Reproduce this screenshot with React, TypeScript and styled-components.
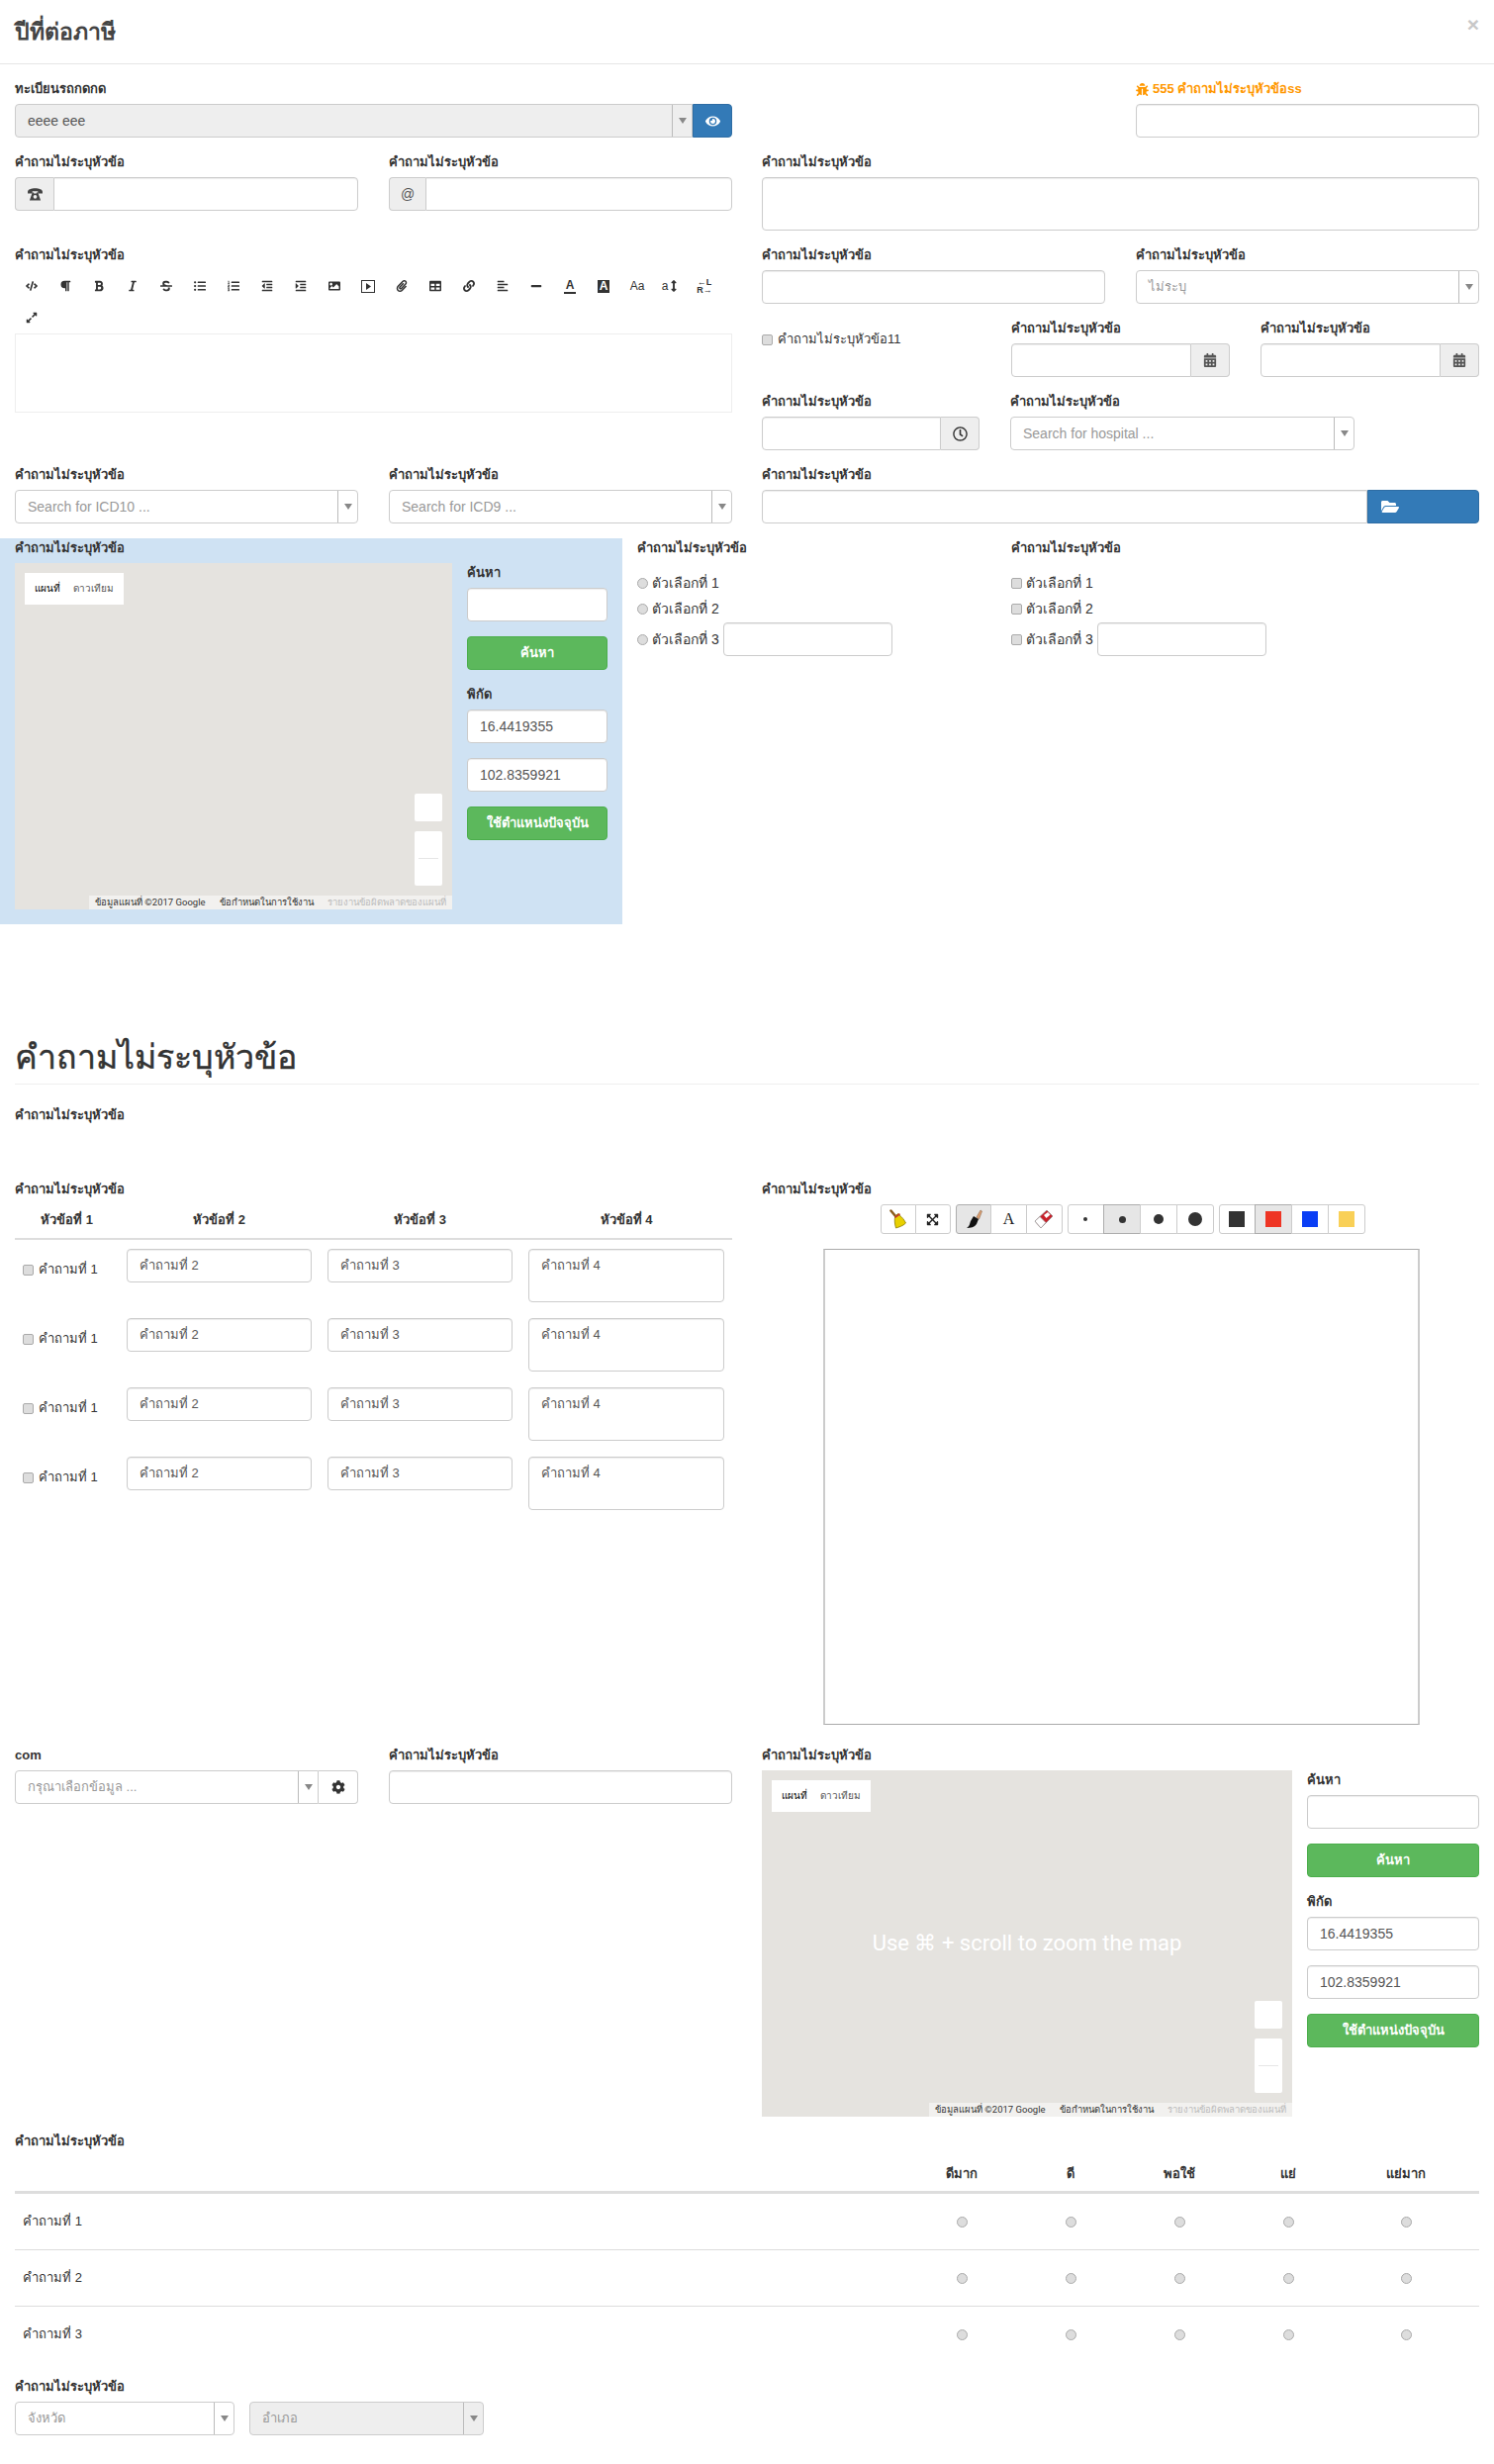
import React from "react";
import styled, { createGlobalStyle } from "styled-components";
import {
  FaAlignLeft, FaBold, FaBug, FaCalendarAlt, FaCode, FaCog, FaExpandAlt, FaEye, FaFolderOpen,
  FaImage, FaIndent, FaItalic, FaLink, FaListOl, FaListUl, FaMinus, FaOutdent, FaParagraph,
  FaPaperclip, FaRegClock, FaStrikethrough, FaTable, FaArrowsAltV, FaExpandArrowsAlt,
} from "react-icons/fa";

const Global = createGlobalStyle`
  html, body { margin: 0; padding: 0; background: #fff; }
  body {
    font-family: "Liberation Sans", "Noto Sans", "DejaVu Sans", sans-serif;
    font-size: 14px;
    line-height: 20px;
    color: #333;
  }
  * { box-sizing: border-box; }
`;

const Page = styled.div`
  width: 1510px;
  min-height: 2490px;
`;

const ModalHeader = styled.div`
  height: 65px;
  padding: 0 15px;
  display: flex;
  justify-content: space-between;
  border-bottom: 1px solid #e5e5e5;
`;

const ModalTitle = styled.h4`
  margin: 0;
  font-size: 23px;
  font-weight: 700;
  line-height: 64px;
  color: #444;
`;

const Close = styled.span`
  font-size: 21px;
  font-weight: 700;
  line-height: 50px;
  color: #c8c8c8;
`;

const Body = styled.div`
  padding: 15px 15px 30px;
`;

const TwoCols = styled.div`
  display: grid;
  grid-template-columns: 725px 725px;
  column-gap: 30px;
`;

const Stack = styled.div`
  display: flex;
  flex-direction: column;
`;

const Pair = styled.div`
  display: grid;
  grid-template-columns: 347px 347px;
  column-gap: 31px;
`;

const Thirds = styled.div`
  display: grid;
  grid-template-columns: 221px 221px 221px;
  column-gap: 31px;
`;

const TimeRow = styled.div`
  display: grid;
  grid-template-columns: 220px 348px;
  column-gap: 31px;
`;

const Field = styled.div<{ $gap?: number }>`
  margin-bottom: ${(p) => p.$gap ?? 15}px;
  min-width: 0;
`;

const Label = styled.label<{ $warn?: boolean }>`
  display: flex;
  align-items: center;
  gap: 4px;
  height: 20px;
  margin-bottom: 5px;
  font-weight: 700;
  font-size: 13px;
  white-space: nowrap;
  color: ${(p) => (p.$warn ? "#ff9800" : "#333")};
`;

const Input = styled.input<{ $flat?: string }>`
  display: block;
  width: 100%;
  height: 34px;
  padding: 0 12px;
  border: 1px solid #ccc;
  border-radius: ${(p) => p.$flat ?? "4px"};
  background: #fff;
  font: inherit;
  color: #555;
  outline: none;
  box-shadow: inset 0 1px 1px rgba(0, 0, 0, 0.075);
`;

const TextBox = styled.div<{ $h?: number }>`
  height: ${(p) => p.$h ?? 54}px;
  padding: 6px 12px;
  border: 1px solid #ccc;
  border-radius: 4px;
  background: #fff;
  color: #555;
  font-size: 13px;
  box-shadow: inset 0 1px 1px rgba(0, 0, 0, 0.075);
`;

const Group = styled.div`
  display: flex;
  height: 34px;
`;

const Addon = styled.span<{ $w: number; $side: "left" | "right"; $plain?: boolean }>`
  flex: none;
  width: ${(p) => p.$w}px;
  display: flex;
  align-items: center;
  justify-content: center;
  background: ${(p) => (p.$plain ? "#fff" : "#eee")};
  border: 1px solid #ccc;
  border-${(p) => (p.$side === "left" ? "right" : "left")}: 0;
  border-radius: ${(p) => (p.$side === "left" ? "4px 0 0 4px" : "0 4px 4px 0")};
  color: #555;
  font-size: 14px;
`;

const SelectBox = styled.div<{ $off?: boolean; $flat?: boolean }>`
  flex: 1;
  height: 34px;
  display: flex;
  align-items: center;
  border: 1px solid #ccc;
  border-radius: ${(p) => (p.$flat ? "4px 0 0 4px" : "4px")};
  background: ${(p) => (p.$off ? "#eee" : "#fff")};
  min-width: 0;
`;

const SelectText = styled.span<{ $dark?: boolean; $latin?: boolean }>`
  flex: 1;
  padding-left: 12px;
  font-size: ${(p) => (p.$latin ? 14 : 13)}px;
  color: ${(p) => (p.$dark ? "#555" : "#999")};
  white-space: nowrap;
`;

const Arrow = styled.span`
  flex: none;
  width: 20px;
  height: 100%;
  display: flex;
  align-items: center;
  justify-content: center;
  border-left: 1px solid #bbb;
  &::after {
    content: "";
    border-top: 6px solid #888;
    border-left: 4px solid transparent;
    border-right: 4px solid transparent;
  }
`;

const Select = ({ text, off, flat, dark, latin }: { text: string; off?: boolean; flat?: boolean; dark?: boolean; latin?: boolean }) => (
  <SelectBox $off={off} $flat={flat}>
    <SelectText $dark={dark} $latin={latin}>{text}</SelectText>
    <Arrow />
  </SelectBox>
);

const SideButton = styled.span<{ $w: number }>`
  flex: none;
  width: ${(p) => p.$w}px;
  display: flex;
  align-items: center;
  background: #337ab7;
  border: 1px solid #2e6da4;
  border-radius: 0 4px 4px 0;
  color: #fff;
  font-size: 15px;
  justify-content: center;
`;

const Toolbar = styled.div`
  display: flex;
  flex-wrap: wrap;
`;

const Tool = styled.span`
  width: 34px;
  height: 32px;
  display: flex;
  align-items: center;
  justify-content: center;
  font-size: 12px;
  color: #333;
`;

const ToolLetter = styled.span<{ $inv?: boolean }>`
  font-size: 12px;
  font-weight: 700;
  line-height: 13px;
  padding: 0 2px;
  color: ${(p) => (p.$inv ? "#fff" : "#333")};
  background: ${(p) => (p.$inv ? "#333" : "transparent")};
  border-bottom: ${(p) => (p.$inv ? "0" : "2px solid #333")};
`;

const ToolSmall = styled.span`
  font-size: 9px;
  line-height: 8px;
  font-weight: 700;
  text-align: center;
  white-space: nowrap;
`;

const Editor = styled.div`
  height: 80px;
  border: 1px solid #eee;
`;

const CheckRow = styled.label`
  display: flex;
  align-items: center;
  gap: 5px;
  height: 20px;
  margin-top: 11px;
  font-size: 13px;
`;

const Box = styled.span`
  flex: none;
  width: 11px;
  height: 11px;
  border: 1px solid #aaa;
  border-radius: 2px;
  background: #ddd;
`;

const Dot = styled(Box)`
  border-radius: 50%;
`;

const PanelRow = styled.div`
  display: flex;
  margin: 0 -15px;
`;

const BluePanel = styled.div`
  width: 629px;
  padding: 0 15px 15px;
  background: #cfe2f3;
`;

const MapRow = styled.div`
  display: flex;
  gap: 15px;
`;

const MapCanvas = styled.div<{ $w: number }>`
  position: relative;
  flex: none;
  width: ${(p) => p.$w}px;
  height: 350px;
  background: #e5e3df;
`;

const MapTabs = styled.div`
  position: absolute;
  left: 10px;
  top: 10px;
  width: 100px;
  height: 32px;
  display: flex;
  align-items: center;
  justify-content: space-around;
  padding: 0 4px;
  background: #fff;
  font-size: 10px;
  font-family: Roboto, "Liberation Sans", sans-serif;
  color: #565656;
`;

const MapTabOn = styled.span`
  color: #000;
  font-weight: 500;
`;

const ZoomBox = styled.div<{ $bottom: number; $h: number }>`
  position: absolute;
  right: 10px;
  bottom: ${(p) => p.$bottom}px;
  width: 28px;
  height: ${(p) => p.$h}px;
  display: flex;
  align-items: center;
  justify-content: center;
  background: #fff;
  border-radius: 2px;
  &::after {
    content: ${(p) => (p.$h > 40 ? '""' : "none")};
    width: 20px;
    height: 1px;
    background: #e6e6e6;
  }
`;

const Attribution = styled.div`
  position: absolute;
  right: 0;
  bottom: 0;
  width: 367px;
  height: 14px;
  display: flex;
  align-items: center;
  justify-content: space-between;
  padding: 0 6px;
  background: rgba(255, 255, 255, 0.5);
  font-family: Roboto, "Liberation Sans", sans-serif;
  font-size: 9.5px;
  white-space: nowrap;
  color: #333;
`;

const AttrFaint = styled.span`
  color: #bbb;
`;

const ZoomHint = styled.div`
  position: absolute;
  inset: 0;
  display: flex;
  align-items: center;
  justify-content: center;
  font-family: Roboto, "Liberation Sans", sans-serif;
  font-size: 22px;
  color: #fff;
`;

const MapSide = styled.div`
  flex: 1;
`;

const GreenButton = styled.div`
  height: 34px;
  margin-bottom: 15px;
  display: flex;
  align-items: center;
  justify-content: center;
  background: #5cb85c;
  border: 1px solid #4cae4c;
  border-radius: 4px;
  color: #fff;
  font-size: 13px;
  font-weight: 700;
`;

const Choices = styled.div`
  width: 347px;
  margin-left: 15px;
  margin-right: 16px;
`;

const ChoiceList = styled.div`
  margin-top: 12px;
  display: flex;
  flex-direction: column;
`;

const Choice = styled.div`
  display: flex;
  align-items: center;
  gap: 4px;
  height: 26px;
  font-size: 14px;
  white-space: nowrap;
`;

const ChoiceInput = styled(Choice)`
  height: 34px;
  margin-top: 1px;
  ${Input} {
    width: 171px;
  }
`;

const SectionTitle = styled.h2`
  display: flex;
  align-items: center;
  height: 56px;
  margin: 106px 0 21px;
  border-bottom: 1px solid #eee;
  font-size: 34px;
  font-weight: 500;
  color: #333;
  -webkit-text-stroke: 0.4px #333;
`;

const LonelyField = styled.div`
  height: 75px;
`;

const Grid4 = styled.div`
  display: grid;
  grid-template-columns: 105px 203px 203px 214px;
`;

const Grid4Head = styled(Grid4)`
  height: 36px;
  padding-top: 6px;
  border-bottom: 2px solid #ddd;
`;

const HeadCell = styled.div`
  text-align: center;
  font-size: 13px;
  font-weight: 700;
`;

const Grid4Row = styled(Grid4)`
  height: 70px;
  padding-top: 9px;
  align-items: start;
`;

const Cell = styled.div`
  padding: 0 8px;
`;

const RowCheck = styled.div`
  display: flex;
  align-items: center;
  gap: 5px;
  height: 20px;
  margin-top: 11px;
  padding-left: 8px;
  font-size: 13px;
  white-space: nowrap;
`;

const TextBoxShort = styled(TextBox)`
  height: 34px;
`;

const DrawTools = styled.div`
  display: flex;
  justify-content: center;
  gap: 5px;
  margin-bottom: 15px;
  padding-left: 4px;
`;

const BtnGroup = styled.div<{ $w: number }>`
  display: flex;
  width: ${(p) => p.$w}px;
`;

const DrawBtn = styled.span<{ $on?: boolean }>`
  flex: 1;
  height: 30px;
  display: flex;
  align-items: center;
  justify-content: center;
  margin-left: -1px;
  border: 1px solid ${(p) => (p.$on ? "#adadad" : "#ccc")};
  background: ${(p) => (p.$on ? "#e6e6e6" : "#fff")};
  font-family: "Liberation Serif", serif;
  font-size: 16px;
  color: #222;
  &:first-child {
    margin-left: 0;
    border-radius: 3px 0 0 3px;
  }
  &:last-child {
    border-radius: 0 3px 3px 0;
  }
`;

const Swatch = styled.span<{ $c: string }>`
  width: 16px;
  height: 16px;
  background: ${(p) => p.$c};
`;

const SizeDot = styled.span<{ $s: number }>`
  width: ${(p) => p.$s}px;
  height: ${(p) => p.$s}px;
  border-radius: 50%;
  background: #333;
`;

const Sketch = styled.div`
  width: 603px;
  height: 481px;
  margin: 0 0 21px 62px;
  border-style: solid;
  border-width: 1px 2px;
  border-color: #aaa #ccc;
`;

const LikertHead = styled.div`
  display: grid;
  grid-template-columns: 1fr 110px 110px 110px 110px 138px;
  height: 38px;
  padding-top: 8px;
  border-bottom: 3px solid #ddd;
`;

const LikertBody = styled.div`
  margin-bottom: 15px;
`;

const LikertRow = styled(LikertHead)`
  height: 57px;
  padding-top: 0;
  align-items: center;
  border-bottom: 1px solid #ddd;
  &:last-child {
    height: 56px;
    border-bottom: 0;
  }
`;

const LikertCell = styled.div<{ $last?: boolean }>`
  display: flex;
  justify-content: center;
  padding-right: ${(p) => (p.$last ? 10 : 0)}px;
  font-size: 13px;
  font-weight: 700;
`;

const LikertText = styled.div`
  padding-left: 8px;
  font-size: 13px;
`;

const AddressRow = styled.div`
  display: flex;
  gap: 15px;
`;

const AddressSelect = styled.div<{ $w: number }>`
  width: ${(p) => p.$w}px;
  display: flex;
`;

const PhoneGlyph = () => (
  <svg width="15" height="14" viewBox="0 0 16 15" fill="#444">
    <path d="M0 5C0 0 16 0 16 5v2h-5V4.500H5V7H0z" />
    <path d="M5 6h1.500v1h3V6H11l3 8.500H2zM8 8.500a2 2 0 1 0 0 4 2 2 0 0 0 0-4z" />
  </svg>
);

const VideoGlyph = () => (
  <svg width="14" height="13" viewBox="0 0 14 13">
    <rect x=".5" y=".5" width="13" height="12" fill="none" stroke="#333" />
    <path d="M5 3l5 3.500L5 10z" fill="#333" />
  </svg>
);

const Broom = () => (
  <svg width="18" height="20" viewBox="0 0 18 20">
    <path d="M1.500 1.500l5 6" stroke="#8a5a1c" strokeWidth="2.500" strokeLinecap="round" />
    <path d="M6 6.500l3-2 1 1.500c3 2 5 5 6.500 8-3 3-7 4-10 5-1-4-2-8-.5-12.500z" fill="#e8d000" stroke="#8c7c00" strokeWidth=".8" />
    <path d="M5 7.500l5-3.500 1 1.500-5 3.500z" fill="#c0392b" />
  </svg>
);

const Brush = () => (
  <svg width="18" height="20" viewBox="0 0 18 20">
    <path d="M12 8l4-7 1.500 1-3 8z" fill="#e0a070" stroke="#8a6a50" strokeWidth=".6" />
    <path d="M9 7l5 3-2 5c-2 3-6 4-10 4 3-2 3-4 4-7z" fill="#111" />
  </svg>
);

const Eraser = () => (
  <svg width="20" height="20" viewBox="0 0 20 20">
    <path d="M1 12L13 1l6 6-12 12z" fill="#c8202a" stroke="#888" strokeWidth=".7" />
    <path d="M1 12l5-4.500 6 6L7 19z" fill="#fff" stroke="#999" strokeWidth=".7" />
    <path d="M10 6l4-3 2.500 2.500-4 3.500z" fill="#fff" />
  </svg>
);

const MapBlock = ({ width, hint }: { width: number; hint?: boolean }) => (
  <MapRow>
    <MapCanvas $w={width}>
      <MapTabs>
        <MapTabOn>แผนที่</MapTabOn>
        <span>ดาวเทียม</span>
      </MapTabs>
      {hint && <ZoomHint>Use ⌘ + scroll to zoom the map</ZoomHint>}
      <ZoomBox $bottom={89} $h={28} />
      <ZoomBox $bottom={24} $h={55} />
      <Attribution>
        <span>ข้อมูลแผนที่ ©2017 Google</span>
        <span>ข้อกำหนดในการใช้งาน</span>
        <AttrFaint>รายงานข้อผิดพลาดของแผนที่</AttrFaint>
      </Attribution>
    </MapCanvas>
    <MapSide>
      <Field>
        <Label>ค้นหา</Label>
        <Input />
      </Field>
      <GreenButton>ค้นหา</GreenButton>
      <Field>
        <Label>พิกัด</Label>
        <Input defaultValue="16.4419355" />
      </Field>
      <Field>
        <Input defaultValue="102.8359921" />
      </Field>
      <GreenButton>ใช้ตำแหน่งปัจจุบัน</GreenButton>
    </MapSide>
  </MapRow>
);

const Q = "คำถามไม่ระบุหัวข้อ";
const LIKERT = ["ดีมาก", "ดี", "พอใช้", "แย่", "แย่มาก"];

export default function App() {
  return (
    <Page>
      <Global />
      <ModalHeader>
        <ModalTitle>ปีที่ต่อภาษี</ModalTitle>
        <Close>×</Close>
      </ModalHeader>
      <Body>
        <TwoCols>
          <Stack>
            <Field>
              <Label>ทะเบียนรถกดกด</Label>
              <Group>
                <Select text="eeee eee" off flat dark latin />
                <SideButton $w={40}><FaEye /></SideButton>
              </Group>
            </Field>
            <Pair>
              <Field $gap={35}>
                <Label>{Q}</Label>
                <Group>
                  <Addon $w={39} $side="left"><PhoneGlyph /></Addon>
                  <Input $flat="0 4px 4px 0" />
                </Group>
              </Field>
              <Field $gap={35}>
                <Label>{Q}</Label>
                <Group>
                  <Addon $w={37} $side="left">@</Addon>
                  <Input $flat="0 4px 4px 0" />
                </Group>
              </Field>
            </Pair>
            <Field>
              <Label>{Q}</Label>
              <Toolbar>
                <Tool><FaCode /></Tool>
                <Tool><FaParagraph /></Tool>
                <Tool><FaBold /></Tool>
                <Tool><FaItalic /></Tool>
                <Tool><FaStrikethrough /></Tool>
                <Tool><FaListUl /></Tool>
                <Tool><FaListOl /></Tool>
                <Tool><FaOutdent /></Tool>
                <Tool><FaIndent /></Tool>
                <Tool><FaImage /></Tool>
                <Tool><VideoGlyph /></Tool>
                <Tool><FaPaperclip /></Tool>
                <Tool><FaTable /></Tool>
                <Tool><FaLink /></Tool>
                <Tool><FaAlignLeft /></Tool>
                <Tool><FaMinus /></Tool>
                <Tool><ToolLetter>A</ToolLetter></Tool>
                <Tool><ToolLetter $inv>A</ToolLetter></Tool>
                <Tool>Aa</Tool>
                <Tool>a<FaArrowsAltV /></Tool>
                <Tool><ToolSmall>←L<br />R→</ToolSmall></Tool>
                <Tool><FaExpandAlt /></Tool>
              </Toolbar>
              <Editor />
            </Field>
          </Stack>
          <Stack>
            <Pair>
              <div />
              <Field>
                <Label $warn><FaBug /> 555 {Q}ss</Label>
                <Input />
              </Field>
            </Pair>
            <Field>
              <Label>{Q}</Label>
              <TextBox />
            </Field>
            <Pair>
              <Field>
                <Label>{Q}</Label>
                <Input />
              </Field>
              <Field>
                <Label>{Q}</Label>
                <Group><Select text="ไม่ระบุ" /></Group>
              </Field>
            </Pair>
            <Thirds>
              <CheckRow><Box />{Q}11</CheckRow>
              <Field>
                <Label>{Q}</Label>
                <Group>
                  <Input $flat="4px 0 0 4px" />
                  <Addon $w={39} $side="right"><FaCalendarAlt /></Addon>
                </Group>
              </Field>
              <Field>
                <Label>{Q}</Label>
                <Group>
                  <Input $flat="4px 0 0 4px" />
                  <Addon $w={39} $side="right"><FaCalendarAlt /></Addon>
                </Group>
              </Field>
            </Thirds>
            <TimeRow>
              <Field>
                <Label>{Q}</Label>
                <Group>
                  <Input $flat="4px 0 0 4px" />
                  <Addon $w={39} $side="right"><FaRegClock size={15} color="#333" /></Addon>
                </Group>
              </Field>
              <Field>
                <Label>{Q}</Label>
                <Group><Select text="Search for hospital ..." latin /></Group>
              </Field>
            </TimeRow>
          </Stack>
          <Pair>
            <Field>
              <Label>{Q}</Label>
              <Group><Select text="Search for ICD10 ..." latin /></Group>
            </Field>
            <Field>
              <Label>{Q}</Label>
              <Group><Select text="Search for ICD9 ..." latin /></Group>
            </Field>
          </Pair>
          <Field>
            <Label>{Q}</Label>
            <Group>
              <Input $flat="4px 0 0 4px" />
              <SideButton $w={113}>
                <FaFolderOpen style={{ marginRight: 68, fontSize: 18 }} />
              </SideButton>
            </Group>
          </Field>
        </TwoCols>

        <PanelRow>
          <BluePanel>
            <Label>{Q}</Label>
            <MapBlock width={442} />
          </BluePanel>
          <Choices>
            <Label>{Q}</Label>
            <ChoiceList>
              <Choice><Dot />ตัวเลือกที่ 1</Choice>
              <Choice><Dot />ตัวเลือกที่ 2</Choice>
              <ChoiceInput><Dot />ตัวเลือกที่ 3<Input /></ChoiceInput>
            </ChoiceList>
          </Choices>
          <Choices>
            <Label>{Q}</Label>
            <ChoiceList>
              <Choice><Box />ตัวเลือกที่ 1</Choice>
              <Choice><Box />ตัวเลือกที่ 2</Choice>
              <ChoiceInput><Box />ตัวเลือกที่ 3<Input /></ChoiceInput>
            </ChoiceList>
          </Choices>
        </PanelRow>

        <SectionTitle>{Q}</SectionTitle>
        <LonelyField><Label>{Q}</Label></LonelyField>

        <TwoCols>
          <div>
            <Label>{Q}</Label>
            <Grid4Head>
              <HeadCell>หัวข้อที่ 1</HeadCell>
              <HeadCell>หัวข้อที่ 2</HeadCell>
              <HeadCell>หัวข้อที่ 3</HeadCell>
              <HeadCell>หัวข้อที่ 4</HeadCell>
            </Grid4Head>
            {[0, 1, 2, 3].map((i) => (
              <Grid4Row key={i}>
                <RowCheck><Box />คำถามที่ 1</RowCheck>
                <Cell><TextBoxShort>คำถามที่ 2</TextBoxShort></Cell>
                <Cell><TextBoxShort>คำถามที่ 3</TextBoxShort></Cell>
                <Cell><TextBox>คำถามที่ 4</TextBox></Cell>
              </Grid4Row>
            ))}
          </div>
          <div>
            <Label>{Q}</Label>
            <DrawTools>
              <BtnGroup $w={71}>
                <DrawBtn><Broom /></DrawBtn>
                <DrawBtn><FaExpandArrowsAlt size={13} /></DrawBtn>
              </BtnGroup>
              <BtnGroup $w={108}>
                <DrawBtn $on><Brush /></DrawBtn>
                <DrawBtn>A</DrawBtn>
                <DrawBtn><Eraser /></DrawBtn>
              </BtnGroup>
              <BtnGroup $w={148}>
                <DrawBtn><SizeDot $s={4} /></DrawBtn>
                <DrawBtn $on><SizeDot $s={7} /></DrawBtn>
                <DrawBtn><SizeDot $s={10} /></DrawBtn>
                <DrawBtn><SizeDot $s={14} /></DrawBtn>
              </BtnGroup>
              <BtnGroup $w={148}>
                <DrawBtn><Swatch $c="#333" /></DrawBtn>
                <DrawBtn $on><Swatch $c="#ee3524" /></DrawBtn>
                <DrawBtn><Swatch $c="#0a3ef5" /></DrawBtn>
                <DrawBtn><Swatch $c="#f9d057" /></DrawBtn>
              </BtnGroup>
            </DrawTools>
            <Sketch />
          </div>

          <Pair>
            <div>
              <Label>com</Label>
              <Group>
                <Select text="กรุณาเลือกข้อมูล ..." flat />
                <Addon $w={40} $side="right" $plain><FaCog size={14} color="#333" /></Addon>
              </Group>
            </div>
            <div>
              <Label>{Q}</Label>
              <Input />
            </div>
          </Pair>
          <Field>
            <Label>{Q}</Label>
            <MapBlock width={536} hint />
          </Field>
        </TwoCols>

        <Label>{Q}</Label>
        <LikertHead>
          <div />
          {LIKERT.map((t, i) => (
            <LikertCell key={t} $last={i === 4}>{t}</LikertCell>
          ))}
        </LikertHead>
        <LikertBody>
          {[1, 2, 3].map((n) => (
            <LikertRow key={n}>
              <LikertText>คำถามที่ {n}</LikertText>
              {LIKERT.map((t, i) => (
                <LikertCell key={t} $last={i === 4}><Dot /></LikertCell>
              ))}
            </LikertRow>
          ))}
        </LikertBody>

        <Label>{Q}</Label>
        <AddressRow>
          <AddressSelect $w={222}><Select text="จังหวัด" /></AddressSelect>
          <AddressSelect $w={237}><Select text="อำเภอ" off /></AddressSelect>
        </AddressRow>
      </Body>
    </Page>
  );
}
